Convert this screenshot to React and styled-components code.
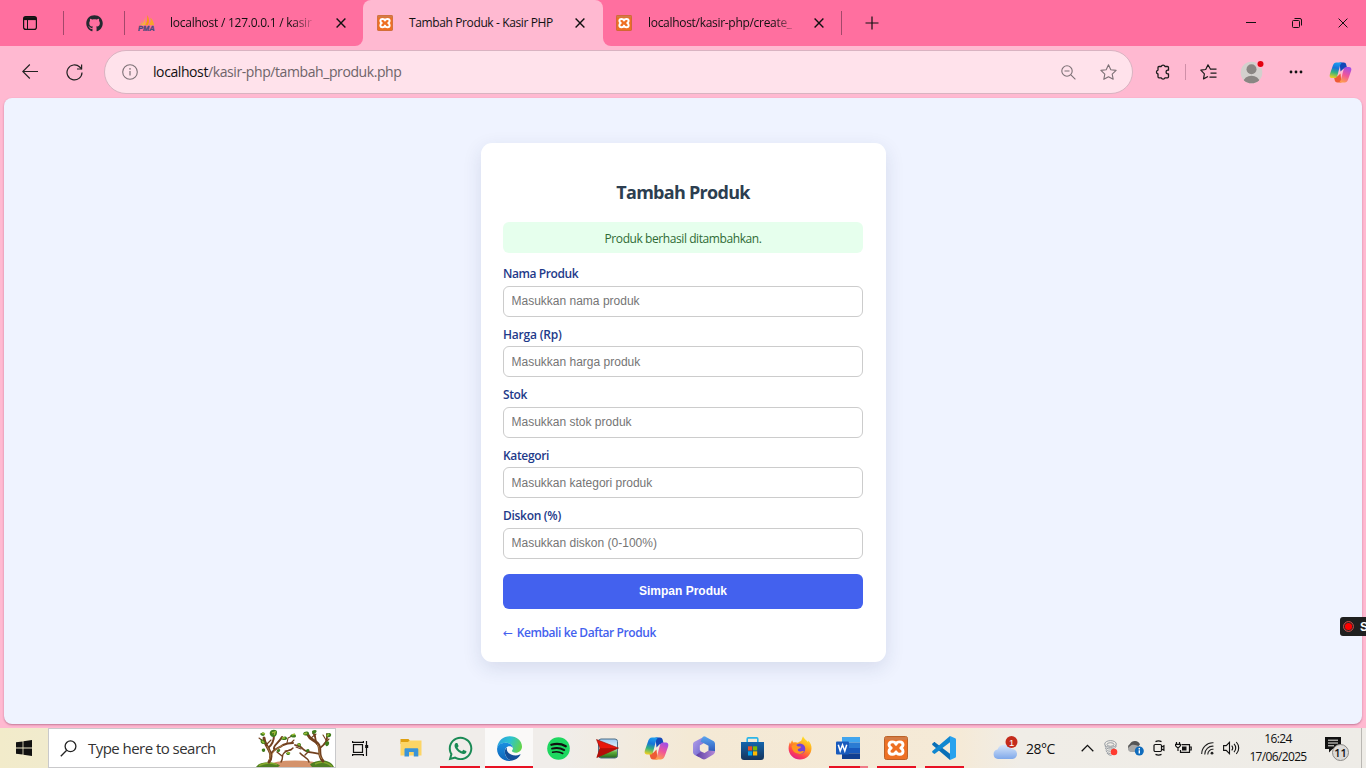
import React from "react";
import styled, { createGlobalStyle, css } from "styled-components";
import { FaGithub, FaWhatsapp } from "react-icons/fa";

const UI_FONT = '"Open Sans", "Noto Sans", "Liberation Sans", sans-serif';

const GlobalStyle = createGlobalStyle`
  * { box-sizing: border-box; }
  html, body { margin: 0; padding: 0; overflow: hidden; }
  body { font-family: ${UI_FONT}; color: #111; }
  svg { display: block; flex: none; }
`;

const Screen = styled.div`
  position: relative;
  width: 1366px;
  height: 768px;
  display: flex;
  flex-direction: column;
  overflow: hidden;
  background: #ffb9d1;
`;

/* ---------- tab strip ---------- */

const TabStrip = styled.header`
  display: flex;
  height: 46px;
  flex: none;
`;

const StripLeft = styled.div`
  display: flex;
  align-items: center;
  width: 363px;
  background: #ff6f9f;
  border-bottom-right-radius: 8px;
`;

const StripRight = styled.div`
  display: flex;
  align-items: center;
  flex: 1;
  background: #ff6f9f;
  border-bottom-left-radius: 8px;
`;

const StripSlot = styled.div`
  display: flex;
  align-items: center;
  justify-content: center;
  width: ${(p) => p.$w}px;
  height: 100%;
  flex: none;
  padding-right: ${(p) => p.$trim || 0}px;
`;

const StripDivider = styled.span`
  width: 1px;
  height: 24px;
  flex: none;
  background: #a3486a;
`;

const ActiveWrap = styled.div`
  width: 240px;
  background: linear-gradient(#ff6f9f 0 50%, #ffb9d1 50%);
`;

const Tab = styled.div`
  display: flex;
  align-items: center;
  width: ${(p) => (p.$active ? 240 : 238)}px;
  height: 46px;
  flex: none;
  padding: 0 ${(p) => (p.$active ? 11 : 10)}px 0 ${(p) => (p.$active ? 14 : 13)}px;
  ${(p) =>
    p.$active &&
    css`
      background: #ffb9d1;
      border-radius: 8px 8px 0 0;
    `}
`;

const TabTitle = styled.span`
  flex: 1;
  min-width: 0;
  margin: 0 14px 0 ${(p) => p.$gap || 16}px;
  white-space: nowrap;
  font-size: 12px;
  line-height: 18px;
  letter-spacing: ${(p) => p.$ls || 0}px;
  ${(p) =>
    p.$fade &&
    css`
      mask-image: linear-gradient(90deg, #000 ${p.$fade}px, transparent ${p.$fade + 24}px);
    `}
`;

const TabClose = styled.span`
  display: flex;
  align-items: center;
  justify-content: center;
  width: 24px;
  height: 24px;
  flex: none;
`;

const WindowControls = styled.div`
  display: flex;
  margin-left: auto;
  height: 100%;
`;

/* ---------- toolbar ---------- */

const Toolbar = styled.nav`
  display: flex;
  align-items: center;
  height: 52px;
  flex: none;
  padding-left: 8px;
`;

const ToolButton = styled.span`
  display: flex;
  align-items: center;
  justify-content: center;
  width: ${(p) => p.$w || 44}px;
  height: 44px;
  flex: none;
  padding-left: ${(p) => p.$inset || 0}px;
`;

const AddressBar = styled.div`
  display: flex;
  align-items: center;
  width: 1029px;
  height: 44px;
  flex: none;
  margin-left: 8px;
  padding: 0 4px 0 17px;
  border: 1px solid #d9b3c1;
  border-radius: 22px;
  background: #ffe2eb;
`;

const Url = styled.span`
  flex: 1;
  margin-left: 15px;
  color: #6e6469;
  font-size: 14px;
  line-height: 20px;
  letter-spacing: -0.41px;
  white-space: nowrap;
  b { color: #111; font-weight: 400; }
`;

const ToolDivider = styled.span`
  width: 1px;
  height: 16px;
  flex: none;
  background: #d08fa8;
`;

/* ---------- page ---------- */

const Viewport = styled.main`
  display: flex;
  justify-content: center;
  align-items: flex-start;
  height: 626px;
  flex: none;
  margin: 0 4px;
  padding: 45px 0 0 1px;
  border-radius: 8px;
  background: #eff3ff;
  box-shadow: 0 1px 2px rgba(120, 40, 80, 0.45);
`;

const Card = styled.form`
  display: flex;
  flex-direction: column;
  width: 405px;
  height: 519px;
  padding: 37px 23px 21px 22px;
  border-radius: 11px;
  background: #fff;
  box-shadow: 0 6px 19px rgba(30, 50, 100, 0.12);
`;

const Title = styled.h2`
  margin: 0 0 18px;
  color: #2c3e50;
  font-size: 18px;
  font-weight: 700;
  line-height: 24px;
  letter-spacing: -0.72px;
  text-align: center;
`;

const Notice = styled.div`
  height: 31px;
  margin-bottom: 13.1px;
  padding-top: 1px;
  border-radius: 6px;
  background: #e6ffed;
  color: #2f6b35;
  font-size: 12px;
  line-height: 32px;
  letter-spacing: -0.42px;
  text-align: center;
`;

const Field = styled.div`
  display: flex;
  flex-direction: column;
  gap: 3.8px;
  margin-bottom: 9.7px;
`;

const Label = styled.label`
  color: #1e3a8a;
  font-size: 12px;
  font-weight: 600;
  line-height: 16px;
  letter-spacing: ${(p) => p.$ls}px;
`;

const Input = styled.input`
  width: 100%;
  height: 31px;
  padding: 0 7.5px 0.6px;
  border: 1px solid #ccc;
  border-radius: 6px;
  outline: none;
  background: #fff;
  font-family: "Liberation Sans", Arial, sans-serif;
  font-size: 12px;
  &::placeholder { color: #757575; opacity: 1; }
`;

const Submit = styled.button`
  height: 35px;
  margin: 5.4px 0 16px;
  padding: 0 0 1px;
  border: 0;
  border-radius: 6px;
  background: #4361ee;
  color: #fff;
  font-family: "Liberation Sans", Arial, sans-serif;
  font-size: 12px;
  font-weight: 700;
`;

const BackLink = styled.a`
  color: #4361ee;
  font-size: 12px;
  font-weight: 600;
  line-height: 16px;
  letter-spacing: -0.41px;
`;

const Arrow = styled.span`
  display: inline-block;
  width: 11px;
  font-family: "DejaVu Sans", sans-serif;
  font-weight: 400;
`;

const RecorderBadge = styled.div`
  position: absolute;
  right: 0;
  top: 617px;
  display: flex;
  align-items: center;
  gap: 6px;
  width: 26px;
  height: 19px;
  padding-left: 3px;
  overflow: hidden;
  border-radius: 3px 0 0 3px;
  background: #1f1f1f;
  color: #fff;
  font: 700 12px "Liberation Sans", sans-serif;
`;

/* ---------- taskbar ---------- */

const Taskbar = styled.footer`
  display: flex;
  align-items: stretch;
  height: 40px;
  flex: none;
  margin-top: 4px;
  background: linear-gradient(90deg, #f2ebca 0, #f1ebcd 44px, #f0edea 330px, #f0edea 560px, #f4e9d5 690px, #f5ead7 960px, #f0ede7 1020px, #eeece7 100%);
`;

const TaskSlot = styled.div`
  display: flex;
  align-items: center;
  justify-content: center;
  position: relative;
  width: 48px;
  flex: none;
  margin-right: ${(p) => p.$mr || 0}px;
  background: ${(p) => (p.$active ? "#faf9f8" : "transparent")};
`;

const Underline = styled.span`
  position: absolute;
  bottom: 0;
  left: ${(p) => (p.$full ? 0 : p.$stacked !== undefined ? 5 : 4)}px;
  right: ${(p) => (p.$full ? 0 : 4)}px;
  height: 2px;
  background: ${(p) => (p.$stacked ? "linear-gradient(90deg, #e81123 31px, #f07a86 31px)" : "#e81123")};
`;

const SearchBox = styled.div`
  display: flex;
  align-items: center;
  width: 288px;
  flex: none;
  padding-left: 11px;
  border: 1px solid #c9c9cb;
  background: #fff;
`;

const SearchText = styled.span`
  flex: 1;
  margin-left: 11px;
  color: #333;
  font-size: 15px;
  line-height: 20px;
  letter-spacing: -0.54px;
  white-space: nowrap;
`;

const Tray = styled.div`
  display: flex;
  align-items: center;
  margin-left: auto;
`;

const Weather = styled.div`
  display: flex;
  align-items: center;
  gap: 8px;
  width: 82px;
  font-size: 14px;
  letter-spacing: -0.5px;
`;

const TrayIcon = styled.span`
  display: flex;
  align-items: center;
  justify-content: center;
  width: 24px;
  height: 40px;
`;

const Clock = styled.div`
  display: flex;
  flex-direction: column;
  align-items: center;
  width: 70px;
  font-size: 12px;
  line-height: 18px;
  letter-spacing: -0.65px;
`;

const Notifications = styled.div`
  display: flex;
  align-items: center;
  width: 49px;
  height: 40px;
  padding-left: 12px;
  border-right: 1px solid #b9b7b3;
  margin-right: 4px;
`;

/* ---------- icons ---------- */

const Cross = ({ size = 10, w = 1.4 }) => (
  <svg width={size} height={size} viewBox="0 0 10 10" stroke="#111" strokeWidth={w}>
    <path d="M.6.6l8.8 8.8M9.4.6L.6 9.4" />
  </svg>
);

const TabMenuIcon = () => (
  <svg width="14" height="14" viewBox="0 0 14 14" fill="none" stroke="#111">
    <rect x=".6" y=".6" width="12.8" height="12.8" rx="2.2" strokeWidth="1.2" />
    <path d="M1 2.6h12" strokeWidth="3" />
    <path d="M4.5 4v9.5" strokeWidth="1" />
  </svg>
);

const PmaIcon = () => (
  <svg width="17" height="16" viewBox="0 0 17 16">
    <path d="M7.200 1C7.300 5 5.500 8 3 10.300h4.500z" fill="#f6b23c" />
    <path d="M9 0c2.500 3 2.600 7 .8 10.300H7.200C9 7.300 9.800 4 9 0z" fill="#f89c0e" />
    <path d="M12.300 2.500c2.500 2.300 3.600 5 3.700 7.800h-5.600c2-2 2.800-5 1.900-7.800z" fill="#f6a32b" />
    <path d="M4 4.500c0 2.500-1 4.500-3 5.800h2.600C4.500 8.500 4.700 6.500 4 4.500z" fill="#eba25a" />
    <text x="0" y="15.800" fontFamily="Liberation Sans" fontStyle="italic" fontWeight="700" fontSize="6.800" textLength="16.500" lengthAdjust="spacingAndGlyphs" fill="#4b4a7b" stroke="#4b4a7b" strokeWidth=".3">PMA</text>
  </svg>
);

const XamppIcon = ({ size }) => (
  <svg width={size} height={size} viewBox="0 0 24 24">
    <rect x=".5" y=".5" width="23" height="23" rx="2" fill="#ee7023" stroke="#b9622a" />
    <path d="M1 2.500h22" stroke="#cf7d4a" strokeWidth="2.500" />
    <path
      d="M12 8.300C11 5 5 5 5 9c0 1.500 1 2.200 2.200 3C6 12.800 5 13.700 5 15.200c0 4 6 4 7 .7 1 3.300 7 3.300 7-.7 0-1.500-1-2.400-2.200-3.200C18 11.200 19 10.500 19 9c0-4-6-4-7-.7z"
      fill="#ee7023" stroke="#fff" strokeWidth="2.900" strokeLinejoin="round"
    />
  </svg>
);

const PlusIcon = () => (
  <svg width="14" height="14" viewBox="0 0 14 14" stroke="#111" strokeWidth="1.200">
    <path d="M7 .5v13M.5 7h13" />
  </svg>
);

const MinimizeIcon = () => (
  <svg width="10" height="10" viewBox="0 0 10 10" stroke="#111">
    <path d="M0 4.500h10" />
  </svg>
);

const RestoreIcon = () => (
  <svg width="10" height="10" viewBox="0 0 10 10" fill="none" stroke="#111">
    <rect x=".5" y="2.500" width="7" height="7" rx="1" />
    <path d="M2.500.5H8A1.500 1.500 0 0 1 9.500 2v5.500" />
  </svg>
);

const BackIcon = () => (
  <svg width="16" height="16" viewBox="0 0 16 16" fill="none" stroke="#222" strokeWidth="1.100">
    <path d="M16 7.500H.8M7.800.5l-7 7 7 7" />
  </svg>
);

const ReloadIcon = () => (
  <svg width="17" height="17" viewBox="0 0 17 17" fill="none" stroke="#222" strokeWidth="1.200">
    <path d="M16 8.500A7.500 7.500 0 1 1 13.700 3l2 2" />
    <path d="M15.600.5V5H11" />
  </svg>
);

const InfoIcon = () => (
  <svg width="16" height="16" viewBox="0 0 16 16" fill="none" stroke="#7d7176">
    <circle cx="8" cy="8" r="7.300" strokeWidth="1.100" />
    <path d="M8 7v4.500" strokeWidth="1.200" />
    <circle cx="8" cy="4.900" r=".8" fill="#7d7176" stroke="none" />
  </svg>
);

const ZoomOutIcon = () => (
  <svg width="15" height="15" viewBox="0 0 15 15" fill="none" stroke="#7d7176" strokeWidth="1.100">
    <circle cx="6" cy="6" r="5.200" />
    <path d="M3.500 6h5M9.900 9.900l4.500 4.500" />
  </svg>
);

const StarIcon = () => (
  <svg width="17" height="16" viewBox="0 0 17 16" fill="none" stroke="#7d7176" strokeWidth="1.100" strokeLinejoin="round">
    <path d="M8.500.8l2.300 4.900 5.300.7-3.900 3.700 1 5.200-4.700-2.600-4.700 2.600 1-5.200L.9 6.400l5.300-.7z" />
  </svg>
);

const PuzzleIcon = () => (
  <svg width="16" height="16" viewBox="0 0 16 16" fill="none" stroke="#1c1c1c" strokeWidth="1.300" strokeLinejoin="round">
    <path d="M4 2.500h2.200a2 2 0 0 1 3.800 0h2.500a1 1 0 0 1 1 1v2.700h-1a1.900 1.900 0 0 0 0 3.700h1v2.900a1 1 0 0 1-1 1H10a2 2 0 0 1-3.800 0H4a1 1 0 0 1-1-1V10a2 2 0 0 1 0-3.900V3.500a1 1 0 0 1 1-1z" />
  </svg>
);

const FavoritesIcon = () => (
  <svg width="17" height="16" viewBox="0 0 17 16" fill="none" stroke="#1c1c1c" strokeWidth="1.200" strokeLinejoin="round">
    <path d="M16.500 5.200h-6L8 .8 5.700 5.500.8 6.200l3.600 3.600-.9 5.100L8 12.500M10.500 9.200h6M9.500 13.200h7" />
  </svg>
);

const AvatarIcon = () => (
  <svg width="24" height="24" viewBox="0 0 24 24">
    <clipPath id="avatarClip"><circle cx="11.500" cy="12.500" r="10.800" /></clipPath>
    <circle cx="11.500" cy="12.500" r="10.800" fill="#d3d0cd" />
    <g clipPath="url(#avatarClip)" fill="#8a8683">
      <circle cx="11.500" cy="9.300" r="5" />
      <ellipse cx="11.500" cy="22" rx="8" ry="6.300" />
    </g>
    <circle cx="20.500" cy="4" r="4" fill="#ffb9d1" />
    <circle cx="20.500" cy="4" r="3" fill="#e3000f" />
  </svg>
);

const DotsIcon = () => (
  <svg width="14" height="4" viewBox="0 0 14 4" fill="#111">
    <circle cx="2" cy="2" r="1.400" /><circle cx="7" cy="2" r="1.400" /><circle cx="12" cy="2" r="1.400" />
  </svg>
);

const CopilotIcon = ({ id, size }) => (
  <svg width={size} height={size} viewBox="0 0 24 24">
    <defs>
      <linearGradient id={`${id}a`} x1=".5" y1="0" x2=".3" y2="1">
        <stop offset="0" stopColor="#1b9df0" /><stop offset=".35" stopColor="#1673d8" />
        <stop offset=".65" stopColor="#35b37c" /><stop offset="1" stopColor="#f3cf20" />
      </linearGradient>
      <linearGradient id={`${id}b`} x1=".7" y1="0" x2=".3" y2="1">
        <stop offset="0" stopColor="#a04ee8" /><stop offset=".5" stopColor="#f0559a" />
        <stop offset="1" stopColor="#ffa24a" />
      </linearGradient>
    </defs>
    <path d="M11 1.500h4.300c1.700 0 2.300.9 2.700 2.300L19 8h-4l-3 3z" fill="#1447b8" />
    <path d="M13 22.500H8.700c-1.700 0-2.300-.9-2.700-2.300L5 16h4l3-3z" fill="#ee5b35" />
    <path d="M14.500 1.500H7.700C5.600 1.500 4.500 3.100 3.700 5.700L.9 13.700C0 16.500 1.300 17.800 3.400 17.800h2.300c1.700 0 2.500-.9 3-2.500l2.700-10C11.900 3.500 12.700 1.500 14.500 1.500z" fill={`url(#${id}a)`} />
    <path d="M9.500 22.500h6.800c2.100 0 3.200-1.600 4-4.200l2.800-8c.9-2.800-.4-4.100-2.500-4.100h-2.300c-1.700 0-2.500.9-3 2.500l-2.700 10c-.5 1.800-1.300 3.800-3.100 3.800z" fill={`url(#${id}b)`} />
  </svg>
);

const WindowsIcon = () => (
  <svg width="16" height="16" viewBox="0 0 16 16" fill="#111">
    <path d="M0 2.300l6.600-.9v6.200H0zM7.400 1.200L16 0v7.600H7.400zM0 8.400h6.600v6.200L0 13.700zM7.400 8.400H16V16l-8.600-1.200z" />
  </svg>
);

const SearchIcon = () => (
  <svg width="17" height="17" viewBox="0 0 17 17" fill="none" stroke="#222" strokeWidth="1.300">
    <circle cx="10.500" cy="6.300" r="5.400" /><path d="M6.700 10.200L.8 16.200" />
  </svg>
);

const TreesIcon = () => (
  <svg width="80" height="38" viewBox="0 0 80 38">
    <ellipse cx="40" cy="36" rx="25" ry="4.500" fill="#d4926b" />
    <path d="M1 38c3-4 7-4.500 12-4.500 6 0 9 1 12 3l-2 1.500zM79 38c-2-4-6-6.500-11-6.500-6 0-10 1.500-13 4l2 2.500z" fill="#4f7f22" />
    <path d="M4 36.500c5-2.500 12-3.500 18-1M60 35c6-3 12-2 17 2.500" stroke="#85a82c" strokeWidth="1.500" fill="none" />
    <g fill="none" stroke="#71401f" strokeLinecap="round">
      <path d="M14 33c4-6 1-10-1-14C11 15 9 13 9 9" strokeWidth="3" />
      <path d="M15 29c0-8 8-9 13-13 4-2 6-2 10-2M13 19c4-3 6-7 6-13M19 20c-1-4 5-6 8-12" strokeWidth="2" />
      <path d="M68 32c-6-6-1-12-5-17-3-4-8-4-10-9" strokeWidth="3" />
      <path d="M64 20c4-4 9-6 8-15M62 15c-3-4 0-8-4-11M65 25c-8-2-14-1-17-5-2-3-5-3-8-4" strokeWidth="1.800" />
      <path d="M26 33c3-4 0-7 3-9 2-3 7-2 9-5M27 27l-5-4M54 33c-1-5-6-5-9-9M50 26l4-4" strokeWidth="1.400" />
      <path d="M8 12L4 9M12 15l4-4M32 14l1-5 4-2M36 14l3-3M56 9l5-4M69 15l5-5M71 11l-3-5M30 22l6-1M46 20l-5-2" strokeWidth="1.100" />
    </g>
    <g fill="none" stroke="#b98a50" strokeWidth=".8">
      <path d="M14 31c3-6 0-9-2-14M67 30c-5-5-1-11-5-15M17 26c2-6 7-7 11-10" />
    </g>
    <g fill="#3f7c1d">
      <path d="M5 5c2-2 5-2 5 0s-3 3-5 0zM6 10c-1 3 0 5 3 5s1-4-3-5zM15 3c1-3 7-3 7 0 0 4-2 5-4 5s-4-3-3-5z" />
      <path d="M26 10c2-3 5-3 6-1s-4 3-6 1zM35 7c2-3 6-2 6 0s-4 2-6 0zM22 21c2-2 4-1 3 1s-4 1-3-1zM31 24c3-2 5-1 4 1s-4 1-4-1z" />
      <path d="M48 5c1-3 5-3 6-1s-4 4-6 1zM57 2c3-2 6-1 4 1.500s-4 1.500-4-1.500zM71 7c0-3 4-4 5-2s-2 5-5 2zM70 14c2-3 5-2 4 1s-4 3-4-1z" />
      <path d="M42 15c2-2 4-1 4 1s-3 2-4-1zM51 21c2-2 4-1 3 1s-4 1-3-1zM10 20c-2-1-4 0-3 2s4 1 3-2z" />
    </g>
    <path d="M7 4l3 1M17 4l3-1-1 3M27 9l3 0M49 5l3-1M72 7l2-2M37 6l3-1M7 12l2 2M32 24l3 0M43 15l2 1" stroke="#9cbc36" strokeWidth="1.500" />
  </svg>
);

const TaskViewIcon = () => (
  <svg width="17" height="15" viewBox="0 0 17 15" fill="none" stroke="#111" strokeWidth="1.200">
    <rect x="1.500" y="3.600" width="9" height="7.800" />
    <path d="M.6 0v1.400h10.800V0M.6 15v-1.400h10.800V15M14.500 0v15" />
    <rect x="13.200" y="4" width="3" height="3" fill="#111" stroke="none" />
  </svg>
);

const FolderIcon = () => (
  <svg width="22" height="20" viewBox="0 0 22 20">
    <path d="M.5 1h8l1.500 2v3H.5z" fill="#dfa010" />
    <path d="M.5 4H8l1.500-1.500h12V17.500H.5z" fill="#fcd566" />
    <path d="M4.500 18.500V11.500c0-.8.500-1.300 1.300-1.300h11.200c.8 0 1.300.5 1.300 1.300v7h-4.500V14H9v4.500z" fill="#3a94d8" />
  </svg>
);

const EdgeIcon = () => (
  <svg width="25" height="25" viewBox="0 0 24 24">
    <defs>
      <linearGradient id="edgeTop" x1="0" y1=".2" x2="1" y2=".5">
        <stop offset="0" stopColor="#2b9fe0" /><stop offset=".5" stopColor="#2cc3d0" /><stop offset="1" stopColor="#62d44c" />
      </linearGradient>
      <linearGradient id="edgeLow" x1="0" y1="0" x2="0" y2="1">
        <stop offset="0" stopColor="#1a8fe0" /><stop offset="1" stopColor="#0f64b8" />
      </linearGradient>
    </defs>
    <path d="M.2 11C.8 4.500 6 .2 12.300.2 19 .2 24 4.800 24 10c0 3.700-2.900 6-6 6-2.200 0-3.700-.7-3.700-1.500 0-.6 1-1 1-2.700C15.300 8.500 12 6.500 8.500 6.500 4.500 6.500 1.500 8.500.2 11z" fill="url(#edgeTop)" />
    <path d="M.1 12C.6 8.500 4 6.500 8 6.500c4.500 0 7.300 2.400 7.300 5.300-.6-1.300-2-1.900-3.300-1.900-3 0-4.500 2.600-4.500 5.300 0 4.500 3.500 8.300 7 8.500-1 .3-2 .3-2.900.3C5 24-.4 18.500.1 12z" fill="url(#edgeLow)" />
    <path d="M9.600 11c-1.500 1-2.100 2.600-2.100 4.200 0 4.300 3.500 8.400 7.200 8.400 3 -.5 6-2.500 7.700-5.300.3-.5-.1-.9-.6-.6-1.200.6-2.500.9-3.900.9-5 0-8.500-3-8.500-6z" fill="#124f99" />
  </svg>
);

const SpotifyIcon = () => (
  <svg width="23" height="23" viewBox="0 0 23 23">
    <circle cx="11.500" cy="11.500" r="11.300" fill="#1ed760" />
    <g fill="none" stroke="#111" strokeLinecap="round">
      <path d="M4.300 7.800c5-1.400 10.300-.9 14.500 1.500" strokeWidth="2.200" />
      <path d="M5 11.700c4.300-1.200 8.700-.7 12.300 1.400" strokeWidth="1.800" />
      <path d="M5.600 15.300c3.600-.9 7.200-.5 10.200 1.200" strokeWidth="1.500" />
    </g>
  </svg>
);

const RedArrowIcon = () => (
  <svg width="23" height="21" viewBox="0 0 23 21">
    <defs>
      <linearGradient id="hill" x1="0" y1="0" x2="0" y2="1">
        <stop offset="0" stopColor="#9cc8f0" /><stop offset=".45" stopColor="#e8f4f8" /><stop offset=".7" stopColor="#5fae3c" /><stop offset="1" stopColor="#23661c" />
      </linearGradient>
    </defs>
    <rect x="2.500" y="1" width="19" height="19" rx="2.500" fill="url(#hill)" stroke="#4f6f86" />
    <path d="M.5 1.500L22.500 10 .8 19.500 4 10.300z" fill="#e8160c" stroke="#8d120c" strokeWidth=".6" />
    <path d="M4 10.300L22.500 10 .8 19.500z" fill="#b30e08" />
  </svg>
);

const OfficeIcon = () => (
  <svg width="24" height="24" viewBox="0 0 24 24">
    <defs>
      <linearGradient id="offA" x1="0" y1="0" x2="1" y2="1"><stop offset="0" stopColor="#b9a3ea" /><stop offset="1" stopColor="#5b59c9" /></linearGradient>
      <linearGradient id="offB" x1="0" y1="0" x2="0" y2="1"><stop offset="0" stopColor="#58a5ef" /><stop offset="1" stopColor="#2d55b8" /></linearGradient>
      <linearGradient id="offC" x1="0" y1="0" x2="1" y2="0"><stop offset="0" stopColor="#5d3ea3" /><stop offset="1" stopColor="#b58ad8" /></linearGradient>
    </defs>
    <path d="M12.500.5L2.500 5.800C1.500 6.400 1 7.200 1 8.300v8c0 1.200.7 2 1.700 2.600l4.500 2.400L9 15.500 7.800 14V9.500l6.700-4z" fill="url(#offA)" />
    <path d="M11 .8c1-.5 2.200-.4 3 .1l7.300 4.200c1.100.7 1.700 1.700 1.700 2.900v8.300l-6.500-1.500V9.800L8.500 5.500z" fill="url(#offB)" />
    <path d="M4 19.300l5-3.800 3.500 1.500 4-2.500L23 15c0 1.500-.5 2.700-1.700 3.400l-7.600 4.700c-1 .6-2.400.6-3.400 0z" fill="url(#offC)" />
  </svg>
);

const StoreIcon = () => (
  <svg width="23" height="23" viewBox="0 0 23 23">
    <defs><linearGradient id="store" x1="0" y1="0" x2="0" y2="1"><stop offset="0" stopColor="#1465ad" /><stop offset="1" stopColor="#16345c" /></linearGradient></defs>
    <path d="M6.200 6V2c0-.7.400-1.100 1.100-1.100h8.400c.7 0 1.100.4 1.100 1.100v4" fill="none" stroke="#2bb5e8" strokeWidth="1.600" />
    <path d="M0 5h23v15a3 3 0 0 1-3 3H3a3 3 0 0 1-3-3z" fill="url(#store)" />
    <path d="M7 9.300h4.200v4.200H7z" fill="#f25022" /><path d="M12 9.300h4.200v4.200H12z" fill="#7fba00" />
    <path d="M7 14.300h4.200v4.200H7z" fill="#00a4ef" /><path d="M12 14.300h4.200v4.200H12z" fill="#ffb900" />
  </svg>
);

const FirefoxIcon = () => (
  <svg width="24" height="24" viewBox="0 0 24 24">
    <defs>
      <linearGradient id="fox" x1=".8" y1=".1" x2=".3" y2="1">
        <stop offset="0" stopColor="#ffe226" /><stop offset=".4" stopColor="#ff9a1f" /><stop offset=".75" stopColor="#ff4052" /><stop offset="1" stopColor="#e0218a" />
      </linearGradient>
    </defs>
    <path d="M15 .3c1 2.500 3.500 4 5 5.700.4-.4.3-1 .2-1.500C22.500 6.500 23.700 9.500 23.500 12.500 23.200 19 18.200 23.500 12 23.500S.6 18.600.6 12.500c0-2.800.7-5.200 1.400-6.500l.8 2C3 6 3.800 4.600 4.300 4.200c.1 1.200.7 2.100 1.400 2.300 1.400-.5 3-.4 4.300.3 1-1 3-1.500 3.500-2.500.5-1.200.8-2.800 1.500-4z" fill="url(#fox)" />
    <circle cx="12" cy="12.800" r="5.300" fill="#7542d6" />
    <path d="M3.500 10c2-1.600 4.500-1.500 6 .2 1.500.3 2.600.1 3.500.6-.4 1.500-2 1.800-3 2.200-.6 1.200.2 2.500 2 2.600 1.500 0 2.500-.9 4-.5-1 2.500-4 3.500-6.500 2.500C5.500 16.500 4 13.500 3.500 10z" fill="#ff9620" />
  </svg>
);

const WordIcon = () => (
  <svg width="24" height="22" viewBox="0 0 24 22">
    <path d="M6 0h18v5.500H6z" fill="#41a5ee" /><path d="M6 5.500h18V11H6z" fill="#2b7cd3" />
    <path d="M6 11h18v5.300H6z" fill="#185abd" /><path d="M6 16.300h18V22H6z" fill="#103f91" />
    <rect x="0" y="4.500" width="13" height="13" rx="1" fill="#185abd" />
    <path d="M2.300 7.700l1.900 6.300 2.300-6.100L8.800 14l1.900-6.300" fill="none" stroke="#fff" strokeWidth="1.500" />
  </svg>
);

const VscodeIcon = () => (
  <svg width="24" height="24" viewBox="0 0 24 24">
    <path d="M1.700 6.400L.4 7.600c-.4.400-.4.900 0 1.300L18 24V17.800L3.200 6.400c-.5-.4-1-.4-1.500 0z" fill="#0a6fb7" />
    <path d="M1.700 17.600L.4 16.400c-.4-.4-.4-.9 0-1.300L18 0v6.200L3.200 17.600c-.5.400-1 .4-1.500 0z" fill="#1087d0" />
    <path d="M18 0l5.200 2.300c.5.300.8.700.8 1.300v16.800c0 .6-.3 1-.8 1.300L18 24z" fill="#28a2ee" />
  </svg>
);

const WeatherIcon = () => (
  <svg width="25" height="24" viewBox="0 0 25 24">
    <defs><linearGradient id="cloud" x1="0" y1="0" x2="0" y2="1"><stop offset="0" stopColor="#dbe9fb" /><stop offset="1" stopColor="#7fa8ea" /></linearGradient></defs>
    <path d="M5 23a4.800 4.800 0 0 1-.5-9.500A7.500 7.500 0 0 1 18.500 13 5 5 0 0 1 19.500 23z" fill="url(#cloud)" />
    <circle cx="18.500" cy="6" r="6" fill="#c42b1c" />
    <text x="18.500" y="9.500" textAnchor="middle" fontFamily="Liberation Sans" fontSize="9.500" fill="#fff">1</text>
  </svg>
);

const ChevronUpIcon = () => (
  <svg width="13" height="8" viewBox="0 0 13 8" fill="none" stroke="#111" strokeWidth="1.300"><path d="M.7 7.200l5.800-5.800 5.800 5.800" /></svg>
);

const CaptureIcon = () => (
  <svg width="14" height="16" viewBox="0 0 14 16" fill="none" stroke="#8f959d" strokeWidth=".9">
    <ellipse cx="6.500" cy="4" rx="5.800" ry="3.400" />
    <ellipse cx="6.500" cy="4.500" rx="3.500" ry="1.800" />
    <path d="M1 5.500C1.500 8 3 9 6.500 9S12 8 12.300 5.500M1.500 8C2 10.500 4 11.200 6.500 11.200M2 10.500c.5 2.200 2.500 3 4.500 3M3 13c.8 1.500 2.500 2.300 4.500 2.300" />
    <circle cx="10" cy="12" r="3.300" fill="#ff3b30" stroke="none" />
  </svg>
);

const OneDriveIcon = () => (
  <svg width="17" height="16" viewBox="0 0 17 16">
    <path d="M3.500 10.500a3.500 3.500 0 0 1-.6-6.500A5.500 5.500 0 0 1 13 4.500l-6 6z" fill="#555" />
    <path d="M3.500 12a3 3 0 0 1-.5-5.800C6 3.500 9 5 15 7.500V12z" fill="#a7a7a7" />
    <circle cx="12.300" cy="11" r="4.500" fill="#0f6cbd" />
    <path d="M12.300 10.300v3.200M12.300 8v1.400" stroke="#fff" strokeWidth="1.400" />
  </svg>
);

const MeetIcon = () => (
  <svg width="12" height="16" viewBox="0 0 12 16" fill="none" stroke="#111" strokeWidth="1.200">
    <rect x="1" y="4.500" width="7.500" height="7" rx="1.200" /><path d="M8.500 7l2.400-1.200v4.400L8.500 9M2.500 1.600c2-1 4-1 6 0M2.500 14.400c2 1 4 1 6 0" />
  </svg>
);

const BatteryIcon = () => (
  <svg width="17" height="12" viewBox="0 0 17 12" fill="none" stroke="#111" strokeWidth="1.200">
    <path d="M6.500 2.600h8v7.800h-9V8M14.700 5h1.500v3h-1.500M1.500 0v2M4.500 0v2M.6 2.300h4.800v1.500L3.800 5.500H2.200L.6 3.800zM3 5.500V9" />
    <path d="M7 4.500h4.500v4H7z" fill="#111" stroke="none" />
  </svg>
);

const WifiIcon = () => (
  <svg width="13" height="13" viewBox="0 0 13 13" fill="none" stroke="#222" strokeWidth="1.100">
    <path d="M.7 12A11 11 0 0 1 12.500.8M3.800 12.400a8 8 0 0 1 8.700-8.200M6.800 12.500A5 5 0 0 1 12.500 7.300" /><circle cx="11" cy="11.200" r="1.400" fill="#222" stroke="none" />
  </svg>
);

const VolumeIcon = () => (
  <svg width="17" height="14" viewBox="0 0 17 14" fill="none" stroke="#111" strokeWidth="1.100">
    <path d="M.6 4.600h2.600L6.500 1.300v11.400L3.200 9.400H.6zM8.700 4.600c1.300 1.500 1.300 3.300 0 4.800M11 2.800c2.300 2.400 2.300 6 0 8.400M13.300 1c3.200 3.500 3.200 8.500 0 12" />
  </svg>
);

const NotificationIcon = () => (
  <svg width="25" height="25" viewBox="0 0 25 25">
    <path d="M0 1h16v12H7.500L4 16.500V13H0z" fill="#111" />
    <path d="M3 4.200h10M3 7h10M3 9.800h6" stroke="#efede8" strokeWidth="1" />
    <circle cx="15.500" cy="16.500" r="8" fill="#dcdad7" stroke="#8b8986" />
    <text x="15.500" y="20.500" textAnchor="middle" fontFamily="Open Sans" fontWeight="600" fontSize="11" fill="#111">11</text>
  </svg>
);

const RecordIcon = () => (
  <svg width="11" height="11" viewBox="0 0 11 11">
    <circle cx="5.500" cy="5.500" r="4.900" fill="none" stroke="#d9534f" /><circle cx="5.500" cy="5.500" r="3.600" fill="#f00" />
  </svg>
);

/* ---------- data ---------- */

const FIELDS = [
  ["Nama Produk", "Masukkan nama produk", -0.42],
  ["Harga (Rp)", "Masukkan harga produk", -0.2],
  ["Stok", "Masukkan stok produk", -0.4],
  ["Kategori", "Masukkan kategori produk", -0.35],
  ["Diskon (%)", "Masukkan diskon (0-100%)", -0.3],
];

const APPS = [
  { icon: <FolderIcon />, mr: 1 },
  { icon: <FaWhatsapp size={27} color="#1a8a55" />, open: true, mr: 1 },
  { icon: <EdgeIcon />, open: true, active: true, mr: 1 },
  { icon: <SpotifyIcon />, mr: 1 },
  { icon: <RedArrowIcon />, mr: 1 },
  { icon: <CopilotIcon id="task" size={25} /> },
  { icon: <OfficeIcon /> },
  { icon: <StoreIcon /> },
  { icon: <FirefoxIcon /> },
  { icon: <WordIcon />, open: true, stacked: true },
  { icon: <XamppIcon size={24} />, open: true, stacked: false },
  { icon: <VscodeIcon />, open: true, stacked: false },
];

export default function App() {
  return (
    <Screen>
      <GlobalStyle />
      <TabStrip>
        <StripLeft>
          <StripSlot $w={63} $trim={3}><TabMenuIcon /></StripSlot>
          <StripDivider />
          <StripSlot $w={60}><FaGithub size={17} color="#24292f" /></StripSlot>
          <StripDivider />
          <Tab>
            <PmaIcon />
            <TabTitle $fade={122} $gap={15} $ls={-0.25}>localhost / 127.0.0.1 / kasir |</TabTitle>
            <TabClose><Cross /></TabClose>
          </Tab>
        </StripLeft>
        <ActiveWrap>
          <Tab $active>
            <XamppIcon size={16} />
            <TabTitle $ls={-0.38}>Tambah Produk - Kasir PHP</TabTitle>
            <TabClose><Cross /></TabClose>
          </Tab>
        </ActiveWrap>
        <StripRight>
          <Tab>
            <XamppIcon size={16} />
            <TabTitle $fade={126} $ls={-0.3}>localhost/kasir-php/create_</TabTitle>
            <TabClose><Cross /></TabClose>
          </Tab>
          <StripDivider />
          <StripSlot $w={59}><PlusIcon /></StripSlot>
          <WindowControls>
            <StripSlot $w={46}><MinimizeIcon /></StripSlot>
            <StripSlot $w={46}><RestoreIcon /></StripSlot>
            <StripSlot $w={46}><Cross w={1} /></StripSlot>
          </WindowControls>
        </StripRight>
      </TabStrip>

      <Toolbar>
        <ToolButton><BackIcon /></ToolButton>
        <ToolButton><ReloadIcon /></ToolButton>
        <AddressBar>
          <InfoIcon />
          <Url><b>localhost</b>/kasir-php/tambah_produk.php</Url>
          <ToolButton $w={40}><ZoomOutIcon /></ToolButton>
          <ToolButton $w={40}><StarIcon /></ToolButton>
        </AddressBar>
        <ToolButton $w={52} $inset={8}><PuzzleIcon /></ToolButton>
        <ToolDivider />
        <ToolButton><FavoritesIcon /></ToolButton>
        <ToolButton><AvatarIcon /></ToolButton>
        <ToolButton><DotsIcon /></ToolButton>
        <ToolButton><CopilotIcon id="bar" size={23} /></ToolButton>
      </Toolbar>

      <Viewport>
        <Card>
          <Title>Tambah Produk</Title>
          <Notice>Produk berhasil ditambahkan.</Notice>
          {FIELDS.map(([label, hint, spacing]) => (
            <Field key={label}>
              <Label $ls={spacing}>{label}</Label>
              <Input placeholder={hint} />
            </Field>
          ))}
          <Submit type="button">Simpan Produk</Submit>
          <BackLink><Arrow>←</Arrow> Kembali ke Daftar Produk</BackLink>
        </Card>
      </Viewport>

      <Taskbar>
        <TaskSlot><WindowsIcon /></TaskSlot>
        <SearchBox>
          <SearchIcon />
          <SearchText>Type here to search</SearchText>
          <TreesIcon />
        </SearchBox>
        <TaskSlot $mr={3}><TaskViewIcon /></TaskSlot>
        {APPS.map((app, i) => (
          <TaskSlot key={i} $mr={app.mr} $active={app.active}>
            {app.icon}
            {app.open && <Underline $full={app.active} $stacked={app.stacked} />}
          </TaskSlot>
        ))}
        <Tray>
          <Weather><WeatherIcon />28°C</Weather>
          <TrayIcon><ChevronUpIcon /></TrayIcon>
          <TrayIcon><CaptureIcon /></TrayIcon>
          <TrayIcon><OneDriveIcon /></TrayIcon>
          <TrayIcon><MeetIcon /></TrayIcon>
          <TrayIcon><BatteryIcon /></TrayIcon>
          <TrayIcon><WifiIcon /></TrayIcon>
          <TrayIcon><VolumeIcon /></TrayIcon>
          <Clock><span>16:24</span><span>17/06/2025</span></Clock>
          <Notifications><NotificationIcon /></Notifications>
        </Tray>
      </Taskbar>

      <RecorderBadge><RecordIcon />S</RecorderBadge>
    </Screen>
  );
}
